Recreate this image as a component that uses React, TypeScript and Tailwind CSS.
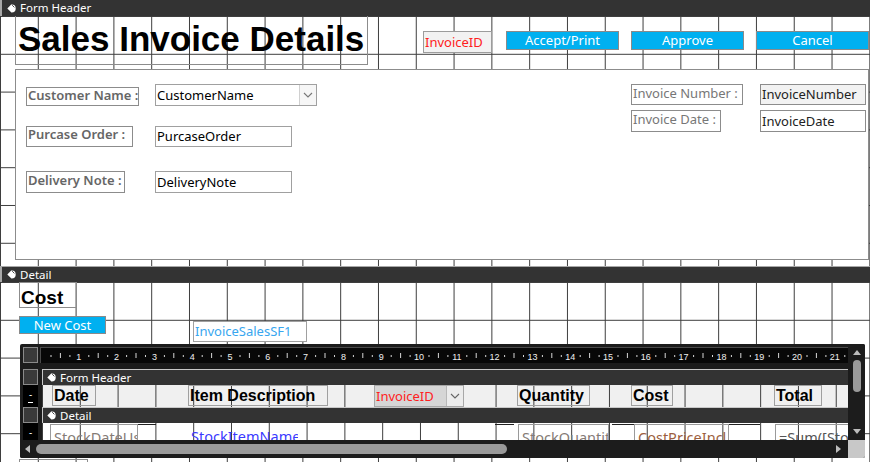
import React from "react";

const GRID =
  "[background-image:linear-gradient(to_right,#3d3d3d_1px,transparent_1px),linear-gradient(to_bottom,#3d3d3d_1px,transparent_1px)] [background-size:37.8px_37.8px]";
const VGRID =
  "[background-image:linear-gradient(to_right,#3d3d3d_1px,transparent_1px)] [background-size:37.8px_100%]";

function SelectorIcon() {
  return (
    <svg width="9" height="9" viewBox="0 0 9 9" className="shrink-0">
      <path d="M0.3 4.6 L4.2 0.6 Q8.7 0.2 8.7 4.4 Q8.7 8.6 4.4 8.5 Z" fill="#fff" />
      <path d="M5.2 1.2 L7.4 3.4" stroke="#333" strokeWidth="0.9" />
    </svg>
  );
}

function Bar({ label, className }: { label: string; className: string }) {
  return (
    <div
      className={`flex items-center gap-[4px] bg-[#333333] text-white text-[11.5px] leading-none font-['Noto_Sans',sans-serif] ${className}`}
    >
      <SelectorIcon />
      <span>{label}</span>
    </div>
  );
}

function Chevron({ color }: { color: string }) {
  return (
    <svg width="10" height="6" viewBox="0 0 10 6">
      <path d="M1 1 L5 5 L9 1" fill="none" stroke={color} strokeWidth="1.1" />
    </svg>
  );
}

function Ruler() {
  const items: React.ReactNode[] = [];
  for (let n = 0; n < 22; n++) {
    const b = n * 37.8;
    items.push(<rect key={`a${n}`} x={b + 9.5} y={7} width={1} height={2} fill="#d8d8d8" />);
    items.push(<rect key={`b${n}`} x={b + 18.9} y={5} width={1} height={5} fill="#d8d8d8" />);
    items.push(<rect key={`c${n}`} x={b + 28.4} y={7} width={1} height={2} fill="#d8d8d8" />);
    if (n < 21)
      items.push(
        <text
          key={`t${n}`}
          x={b + 37.8}
          y={11.5}
          fontSize={9}
          fill="#f0f0f0"
          textAnchor="middle"
          fontFamily="Liberation Sans, Arial, sans-serif"
        >
          {n + 1}
        </text>
      );
  }
  return (
    <div className="w-[808px] h-[16px] bg-[#080808] border-t border-l border-[#4a4a4a] overflow-hidden">
      <svg width="808" height="16">{items}</svg>
    </div>
  );
}

export default function App() {
  return (
    <div className="w-[870px] h-[462px] overflow-hidden bg-white flex flex-col font-['Noto_Sans',sans-serif]">
      <Bar label="Form Header" className="h-[16px] pl-[5px] border-l-2 border-[#a8a8a8]" />

      {/* Form header section */}
      <div className={`relative h-[250px] shrink-0 ${GRID}`}>
        <div className="absolute left-[15px] top-0 w-[353px] h-[49px] border border-t-0 border-[#8c8c8c] font-['Liberation_Sans',Arial,sans-serif] font-bold text-[35px] leading-[46px] pl-[2px] text-black whitespace-nowrap">
          Sales Invoice Details
        </div>

        <div className="absolute left-[423px] top-[15px] w-[69px] h-[22px] bg-[#f2f2f2] border border-[#9c9c9c] text-[#ff2020] text-[13px] leading-[20px] pl-[1px]">
          InvoiceID
        </div>
        <div className="absolute left-[506px] top-[15px] w-[113px] h-[19px] bg-[#00b0f0] border border-[#8a8a8a] text-white text-[13px] leading-[16px] text-center">
          Accept/Print
        </div>
        <div className="absolute left-[631px] top-[15px] w-[113px] h-[19px] bg-[#00b0f0] border border-[#8a8a8a] text-white text-[13px] leading-[16px] text-center">
          Approve
        </div>
        <div className="absolute left-[756px] top-[15px] w-[113px] h-[19px] bg-[#00b0f0] border border-[#8a8a8a] text-white text-[13px] leading-[16px] text-center">
          Cancel
        </div>

        {/* white panel */}
        <div className="absolute left-[15px] top-[53px] w-[854px] h-[191px] bg-white border border-[#8c8c8c]" />

        <div className="absolute left-[26px] top-[71px] w-[113px] h-[19px] border border-[#8c8c8c] text-[#666666] font-semibold text-[13px] leading-[15px] pl-[1px] whitespace-nowrap">
          Customer Name :
        </div>
        <div className="absolute left-[155px] top-[68px] w-[162px] h-[22px] border border-[#a0a0a0] bg-white flex">
          <div className="flex-1 text-[13px] leading-[20px] pl-[1px] text-black">CustomerName</div>
          <div className="w-[17px] h-full bg-[#f6f6f6] border-l border-[#d0d0d0] flex items-center justify-center">
            <Chevron color="#777" />
          </div>
        </div>

        <div className="absolute left-[26px] top-[110px] w-[107px] h-[21px] border border-[#8c8c8c] text-[#666666] font-semibold text-[13px] leading-[15px] pl-[1px] whitespace-nowrap">
          Purcase Order :
        </div>
        <div className="absolute left-[155px] top-[110px] w-[137px] h-[21px] border border-[#a0a0a0] bg-white text-[13px] leading-[19px] pl-[1px] text-black">
          PurcaseOrder
        </div>

        <div className="absolute left-[26px] top-[155px] w-[99px] h-[22px] border border-[#8c8c8c] text-[#666666] font-semibold text-[13px] leading-[17px] pl-[1px] whitespace-nowrap">
          Delivery Note :
        </div>
        <div className="absolute left-[155px] top-[155px] w-[137px] h-[22px] border border-[#a0a0a0] bg-white text-[13px] leading-[20px] pl-[1px] text-black">
          DeliveryNote
        </div>

        <div className="absolute left-[631px] top-[68px] w-[112px] h-[21px] border border-[#8c8c8c] text-[#777777] text-[13px] leading-[16px] pl-[1px] whitespace-nowrap">
          Invoice Number :
        </div>
        <div className="absolute left-[760px] top-[68px] w-[106px] h-[21px] border border-[#8c8c8c] bg-[#f2f2f2] text-[13px] leading-[19px] pl-[1px] text-[#222]">
          InvoiceNumber
        </div>
        <div className="absolute left-[631px] top-[94px] w-[90px] h-[22px] border border-[#8c8c8c] text-[#777777] text-[13px] leading-[16px] pl-[1px] whitespace-nowrap">
          Invoice Date :
        </div>
        <div className="absolute left-[760px] top-[94px] w-[106px] h-[22px] border border-[#8c8c8c] bg-white text-[13px] leading-[20px] pl-[1px] text-[#222]">
          InvoiceDate
        </div>
      </div>

      <Bar label="Detail" className="h-[16px] shrink-0 pl-[5px] border-l-2 border-t border-[#a8a8a8]" />

      {/* Detail section */}
      <div className={`relative flex-1 ${GRID}`}>
        <div className="absolute left-[19px] top-0 w-[58px] h-[26px] border border-[#8c8c8c] font-['Liberation_Sans',Arial,sans-serif] font-bold text-[19px] leading-[24px] pt-[3px] pl-[1px] text-black">
          Cost
        </div>
        <div className="absolute left-[19px] top-[34px] w-[87px] h-[18px] bg-[#00b0f0] border border-[#8a8a8a] text-white text-[13px] leading-[16px] text-center">
          New Cost
        </div>
        <div className="absolute left-[193px] top-[39px] w-[114px] h-[21px] bg-white border border-[#a0a0a0] text-[#38a6ef] text-[13px] leading-[19px] pl-[1px]">
          InvoiceSalesSF1
        </div>
        <div className="absolute left-[19px] top-[177px] w-[69px] h-[12px] border border-[#8c8c8c]" />

        {/* Subform */}
        <div className="absolute left-[20px] top-[62px] w-[845px] h-[114px] bg-[#1c1c1c] flex flex-col overflow-hidden rounded-[2px]">
          <div className="flex h-[96px]">
            <div className="w-[828px] flex flex-col pt-[3px] overflow-hidden">
              <div className="flex h-[16px] pl-[3px] gap-[2px]">
                <div className="w-[15px] h-[16px] bg-[#3a3a3a] border border-[#8a8a8a]" />
                <Ruler />
              </div>
              <div className="h-[6px] shrink-0" />
              <div className="flex flex-1 gap-[4px] overflow-hidden">
                <div className="w-[18px] pl-[3px] flex flex-col">
                  <div className="h-[16px] bg-[#3a3a3a] border border-[#8a8a8a]" />
                  <div className="h-[22px] bg-black flex flex-col items-center justify-center gap-[4px] text-white text-[10px] leading-[8px]">
                    <span>-</span>
                    <div className="w-[5px] h-[1px] bg-white" />
                  </div>
                  <div className="h-[16px] bg-[#3a3a3a] border border-[#8a8a8a]" />
                  <div className="h-[17px] bg-black flex items-center justify-center text-white text-[10px] leading-none">
                    -
                  </div>
                </div>
                <div className="w-[806px] flex flex-col">
                  <Bar label="Form Header" className="h-[16px] shrink-0 pl-[4px] border-t border-l border-[#c8c8c8]" />
                  <div className={`relative h-[22px] shrink-0 bg-[#f0f0f0] ${VGRID} font-['Liberation_Sans',Arial,sans-serif] font-bold text-[16px] text-black`}>
                    <div className="absolute left-[10px] top-0 w-[44px] h-[21px] border border-[#a0a0a0] leading-[19px] pl-[1px]">Date</div>
                    <div className="absolute left-[146px] top-0 w-[140px] h-[21px] border border-[#a0a0a0] leading-[19px] pl-[1px] whitespace-nowrap">
                      Item Description
                    </div>
                    <div className="absolute left-[332px] top-0 w-[90px] h-[22px] bg-[#d6d6d6] border border-[#a8a8a8] flex font-['Noto_Sans',sans-serif] font-normal">
                      <div className="flex-1 text-[#ff2020] text-[13px] leading-[20px] pl-[1px]">InvoiceID</div>
                      <div className="w-[17px] h-full bg-[#ececec] border-l border-[#b8b8b8] flex items-center justify-center">
                        <Chevron color="#666" />
                      </div>
                    </div>
                    <div className="absolute left-[475px] top-0 w-[73px] h-[21px] border border-[#a0a0a0] leading-[19px] pl-[1px]">Quantity</div>
                    <div className="absolute left-[589px] top-0 w-[42px] h-[21px] border border-[#a0a0a0] leading-[19px] pl-[1px]">Cost</div>
                    <div className="absolute left-[732px] top-0 w-[48px] h-[21px] border border-[#a0a0a0] leading-[19px] pl-[1px]">Total</div>
                  </div>
                  <Bar label="Detail" className="h-[16px] shrink-0 pl-[4px] border-t border-l border-[#c8c8c8]" />
                  <div className={`relative h-[30px] shrink-0 bg-white ${VGRID} text-[14.5px] leading-[24px]`}>
                    <div className="absolute left-[8px] top-[1px] w-[88px] h-[26px] border border-[#9a9a9a] pl-[3px] text-[#857b76] whitespace-nowrap overflow-hidden">StockDateUsed</div>
                    <div className="absolute left-[96px] top-[1px] w-[18px] h-[26px] border-t border-[#222]" />
                    <div className="absolute left-[146px] top-[1px] w-[110px] h-[26px] pl-[3px] text-[#3a3aff] underline whitespace-nowrap overflow-hidden">StockItemName</div>
                    <div className="absolute left-[453px] top-[1px] w-[19px] h-[26px] border-t border-[#222]" />
                    <div className="absolute left-[476px] top-[1px] w-[91px] h-[26px] border border-[#9a9a9a] pl-[3px] text-[#857b76] whitespace-nowrap overflow-hidden">StockQuantity</div>
                    <div className="absolute left-[570px] top-[1px] w-[22px] h-[26px] border-t border-[#222]" />
                    <div className="absolute left-[592px] top-[1px] w-[95px] h-[26px] border border-[#9a9a9a] pl-[3px] text-[#9c5e3e] whitespace-nowrap overflow-hidden">CostPriceIncl</div>
                    <div className="absolute left-[687px] top-[1px] w-[31px] h-[26px] border-t border-[#222]" />
                    <div className="absolute left-[733px] top-[1px] w-[90px] h-[26px] border border-[#9a9a9a] pl-[3px] text-[#555] whitespace-nowrap overflow-hidden">=Sum([StockQuantity])</div>
                  </div>
                </div>
              </div>
            </div>
            {/* vertical scrollbar */}
            <div className="w-[17px] flex flex-col items-center pt-[5px] pb-[5px] bg-[#1c1c1c]">
              <svg width="10" height="7" viewBox="0 0 10 7">
                <path d="M1 6 L5 1 L9 6 Z" fill="#bdbdbd" />
              </svg>
              <div className="mt-[4px] w-[8px] h-[32px] rounded-full bg-[#9a9a9a]" />
              <div className="flex-1" />
              <svg width="10" height="7" viewBox="0 0 10 7">
                <path d="M1 1 L5 6 L9 1 Z" fill="#bdbdbd" />
              </svg>
            </div>
          </div>
          <div className="flex h-[18px]">
            <div className="w-[828px] flex items-center pl-[4px] pr-[6px] gap-[5px] bg-[#1c1c1c]">
              <svg width="7" height="10" viewBox="0 0 7 10">
                <path d="M6 1 L1 5 L6 9 Z" fill="#bdbdbd" />
              </svg>
              <div className="w-[471px] h-[10px] rounded-full bg-[#9a9a9a]" />
              <div className="flex-1" />
              <svg width="7" height="10" viewBox="0 0 7 10">
                <path d="M1 1 L6 5 L1 9 Z" fill="#bdbdbd" />
              </svg>
            </div>
            <div className="w-[17px] bg-[#c8c8c8]" />
          </div>
        </div>
      </div>
    </div>
  );
}
